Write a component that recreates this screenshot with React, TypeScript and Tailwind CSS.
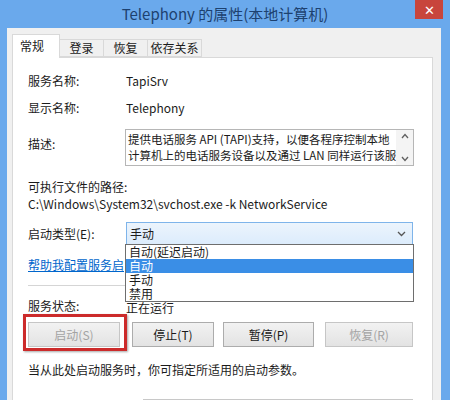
import React from "react";

const font = { fontFamily: '"Noto Sans CJK SC", "Noto Sans", sans-serif' };

function Row({ label, children, className = "" }: { label: string; children?: React.ReactNode; className?: string }) {
  return (
    <div className={`flex items-center ${className}`}>
      <div className="w-[98px] shrink-0">{label}</div>
      {children}
    </div>
  );
}

function Btn({ label, disabled, w }: { label: string; disabled?: boolean; w: string }) {
  return (
    <div
      className={`${w} h-[25px] flex items-center justify-center border bg-gradient-to-b from-[#f2f2f2] to-[#e3e3e3] ${
        disabled ? "border-[#c6c6c6] text-[#a3a3a3]" : "border-[#acacac] text-[#1a1a1a]"
      }`}
    >
      {label}
    </div>
  );
}

export default function App() {
  return (
    <div className="relative w-[450px] h-[400px] overflow-hidden bg-[#6aa9ec] text-[12px] text-[#1b1b1b]" style={font}>
      {/* title bar */}
      <div className="h-[28px] flex items-center justify-center text-[15px] text-[#1d416f]">
        Telephony 的属性(本地计算机)
      </div>
      <div className="absolute right-[7px] top-0 w-[28px] h-[19px] bg-[#c8453c] flex items-center justify-center text-white text-[13px] leading-none">
        ✕
      </div>

      {/* client area */}
      <div className="ml-[7px] mr-[9px] h-[372px] bg-[#f0f0f0] pl-[5px] pr-[8px] pt-[6px]">
        {/* tabs */}
        <div className="flex items-end h-[23px]">
          <div className="w-[48px] h-[24px] bg-white border border-b-0 border-[#d9d9d9] pl-[7px] pt-[2px] relative top-px z-10">常规</div>
          <div className="w-[44px] h-[18px] border border-l-0 border-[#d9d9d9] flex items-center justify-center">登录</div>
          <div className="w-[44px] h-[18px] border border-l-0 border-[#d9d9d9] flex items-center justify-center">恢复</div>
          <div className="w-[54px] h-[18px] border border-l-0 border-[#d9d9d9] flex items-center justify-center">依存关系</div>
        </div>

        {/* panel */}
        <div className="bg-white border border-[#d9d9d9] h-[400px] pl-[15px] pr-[19px]">
          <Row label="服务名称:" className="mt-[13px] h-[20px]">
            <span>TapiSrv</span>
          </Row>
          <Row label="显示名称:" className="mt-[7px] h-[20px]">
            <span>Telephony</span>
          </Row>
          <div className="flex mt-[11px]">
            <div className="w-[97px] shrink-0 pt-[6px]">描述:</div>
            <div className="flex-1 h-[37px] border border-[#b6b6b6] flex">
              <div className="flex-1 pl-[2px] leading-[16px] pt-px text-[11.5px] whitespace-nowrap overflow-hidden">
                <div>提供电话服务 API (TAPI)支持，以便各程序控制本地</div>
                <div>计算机上的电话服务设备以及通过 LAN 同样运行该服</div>
              </div>
              <div className="w-[17px] bg-[#f4f4f4] flex flex-col items-center justify-between py-[3px] text-[#606060]">
                <svg width="8" height="6" viewBox="0 0 8 6"><path d="M1 5 L4 1.5 L7 5" fill="none" stroke="currentColor" strokeWidth="1.3" /></svg>
                <svg width="8" height="6" viewBox="0 0 8 6"><path d="M1 1 L4 4.5 L7 1" fill="none" stroke="currentColor" strokeWidth="1.3" /></svg>
              </div>
            </div>
          </div>
          <div className="mt-[13px] h-[16px] flex items-center">可执行文件的路径:</div>
          <div className="mt-px h-[16px] flex items-center">C:\Windows\System32\svchost.exe -k NetworkService</div>
          <Row label="启动类型(E):" className="mt-[10px]">
            <div className="flex-1 h-[23px] border border-[#7eb4ea] bg-gradient-to-b from-[#ecf4fc] to-[#dcecfc] flex items-center pl-[3px] pr-[6px]">
              <span className="flex-1">手动</span>
              <svg width="9" height="6" viewBox="0 0 9 6" className="text-[#555]"><path d="M1 1 L4.5 4.5 L8 1" fill="none" stroke="currentColor" strokeWidth="1.3" /></svg>
            </div>
          </Row>
          {/* link text is cut by the open list in the reference */}
          <div className="mt-[12px] h-[16px] w-[96px] overflow-hidden whitespace-nowrap leading-[16px] text-[#0066cc] underline">帮助我配置服务启动选项。</div>
          <div className="mt-[12px] h-px bg-[#d5d5d5]" />
          <Row label="服务状态:" className="mt-[12px] h-[16px]">
            <span className="leading-[16px] pt-[3px]">正在运行</span>
          </Row>
          <div className="mt-[8px] flex">
            <Btn label="启动(S)" disabled w="w-[92px]" />
            <div className="ml-[12px]"><Btn label="停止(T)" w="w-[82px]" /></div>
            <div className="ml-[9px]"><Btn label="暂停(P)" w="w-[91px]" /></div>
            <div className="ml-[11px]"><Btn label="恢复(R)" disabled w="w-[88px]" /></div>
          </div>
          <div className="mt-[15px] h-[16px] flex items-center">当从此处启动服务时，你可指定所适用的启动参数。</div>
          <div className="mt-[21px] ml-[115px] h-[22px] border border-[#c8c8c8]" />
        </div>
      </div>

      {/* open dropdown list */}
      <div className="absolute left-[125px] top-[244px] w-[289px] h-[58px] bg-white border border-[#6e6e6e] z-20">
        <div className="h-[14px] leading-[14px] overflow-hidden pl-[3px]">自动(延迟启动)</div>
        <div className="h-[14px] leading-[14px] overflow-hidden pl-[3px] bg-[#3a8ee6] text-white">自动</div>
        <div className="h-[14px] leading-[14px] overflow-hidden pl-[3px]">手动</div>
        <div className="h-[14px] leading-[14px] overflow-hidden pl-[3px]">禁用</div>
      </div>

      {/* red highlight */}
      <div className="absolute left-[23px] top-[314px] w-[104px] h-[37px] border-[3px] border-[#cc2b2b] shadow-[1px_1px_2px_rgba(0,0,0,0.35)] z-20" />
    </div>
  );
}
